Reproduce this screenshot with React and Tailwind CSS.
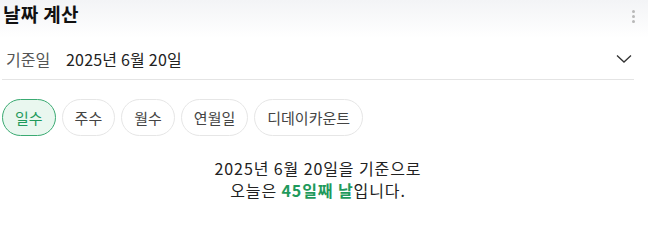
import React from "react";

const font = { fontFamily: '"Noto Sans CJK KR", "Noto Sans", sans-serif' };

function Chip({ label, active }) {
  return (
    <button
      className={
        active
          ? "h-[37px] px-[12px] rounded-full border border-[#3aaa72] bg-[#e9f7ef] text-[#1f9a5c] text-[15px] leading-none"
          : "h-[37px] px-[12px] rounded-full border border-[#e6e6e6] bg-white text-[#444] text-[15px] leading-none"
      }
    >
      {label}
    </button>
  );
}

export default function App() {
  return (
    <div className="w-[648px] h-[207px] bg-white overflow-hidden" style={font}>
      <div className="h-[38px] bg-gradient-to-b from-[#f3f4f6] to-white flex items-start justify-between pl-[3px] pr-[13px]">
        <h1 className="text-[19px] font-bold text-[#111] leading-none mt-[4px] tracking-[0.3px]">날짜 계산</h1>
        <div className="flex flex-col gap-[2px] mt-[10px]">
          <span className="block w-[3px] h-[3px] rounded-full bg-[#b8b8b8]" />
          <span className="block w-[3px] h-[3px] rounded-full bg-[#b8b8b8]" />
          <span className="block w-[3px] h-[3px] rounded-full bg-[#b8b8b8]" />
        </div>
      </div>
      <div className="ml-[2px] w-[632px] h-[42px] border-b border-[#e4e4e4] flex items-center justify-between">
        <div className="flex items-center text-[16px] leading-none pl-[4px]">
          <span className="text-[#555] w-[60px]">기준일</span>
          <span className="text-[#222] tracking-[0.2px]">2025년 6월 20일</span>
        </div>
        <svg width="16" height="10" viewBox="0 0 16 10" className="mr-[2px]">
          <path d="M1 1.5 L8 8 L15 1.5" fill="none" stroke="#333" strokeWidth="1.3" />
        </svg>
      </div>
      <div className="flex gap-[6px] pl-[2px] mt-[19px]">
        <Chip label="일수" active />
        <Chip label="주수" />
        <Chip label="월수" />
        <Chip label="연월일" />
        <Chip label="디데이카운트" />
      </div>
      <div className="w-[636px] mt-[21px] flex flex-col items-center text-[16px] text-[#222] tracking-[0.9px]">
        <div className="h-[22px] leading-[22px]">2025년 6월 20일을 기준으로</div>
        <div className="h-[22px] leading-[22px]">
          오늘은 <span className="font-bold text-[#1f9a5c]">45일째 날</span>입니다.
        </div>
      </div>
    </div>
  );
}
